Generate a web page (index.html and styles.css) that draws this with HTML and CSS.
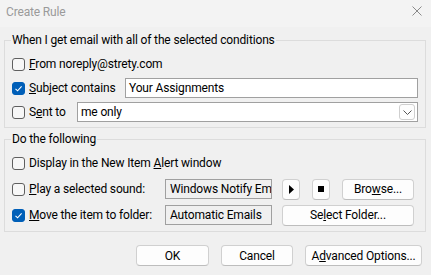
FILE: index.html
```html
<!DOCTYPE html>
<html lang="en">
<head>
    <meta charset="UTF-8">
    <title>Create Rule</title>
    <link rel="stylesheet" href="styles.css">
</head>
<body>
<div class="titlebar">
    <span class="title">Create Rule</span>
    <svg class="close" width="10" height="10" viewBox="0 0 10 10">
        <path d="M0.5 0.5 L9.5 9.5 M9.5 0.5 L0.5 9.5" stroke="#8a8a8a" stroke-width="1" fill="none"/>
    </svg>
</div>
<div class="dialog">
    <fieldset class="group">
        <legend>When I get email with all of the selected conditions</legend>
        <div class="row">
            <span class="check"></span>
            <span class="label"><u>F</u>rom noreply@strety.com</span>
        </div>
        <div class="row">
            <span class="check on">
                <svg width="13" height="13" viewBox="0 0 13 13"><path d="M3.5 6.8 L5.6 8.8 L9.6 4.4" stroke="#fff" stroke-width="1.1" fill="none"/></svg>
            </span>
            <span class="label label-subject"><u>S</u>ubject contains</span>
            <div class="field">Your Assignments</div>
        </div>
        <div class="row">
            <span class="check"></span>
            <span class="label label-sent">S<u>e</u>nt to</span>
            <div class="field select">
                <span>me only</span>
                <span class="drop">
                    <svg width="9" height="5" viewBox="0 0 9 5"><path d="M0.5 0.5 L4.5 4.5 L8.5 0.5" stroke="#555" stroke-width="1" fill="none"/></svg>
                </span>
            </div>
        </div>
    </fieldset>

    <fieldset class="group group-actions">
        <legend>Do the following</legend>
        <div class="row">
            <span class="check"></span>
            <span class="label">Display in the New Item <u>A</u>lert window</span>
        </div>
        <div class="row">
            <span class="check"></span>
            <span class="label label-action"><u>P</u>lay a selected sound:</span>
            <div class="field readonly">Windows Notify Email</div>
            <button class="btn btn-icon">
                <svg width="5" height="9" viewBox="0 0 5 9"><path d="M0 0 L5 4.5 L0 9 Z" fill="#000"/></svg>
            </button>
            <button class="btn btn-icon">
                <svg width="6" height="6" viewBox="0 0 6 6"><rect width="6" height="6" fill="#000"/></svg>
            </button>
            <button class="btn btn-browse">Bro<u>w</u>se...</button>
        </div>
        <div class="row">
            <span class="check on">
                <svg width="13" height="13" viewBox="0 0 13 13"><path d="M3.5 6.8 L5.6 8.8 L9.6 4.4" stroke="#fff" stroke-width="1.1" fill="none"/></svg>
            </span>
            <span class="label label-action"><u>M</u>ove the item to folder:</span>
            <div class="field readonly">Automatic Emails</div>
            <button class="btn btn-folder">Se<u>l</u>ect Folder...</button>
        </div>
    </fieldset>

    <div class="actions">
        <button class="btn btn-ok">OK</button>
        <button class="btn btn-cancel">Cancel</button>
        <button class="btn btn-advanced">A<u>d</u>vanced Options...</button>
    </div>
</div>
</body>
</html>
```

FILE: styles.css
```css
/* Dialog */
body {
    font-family: Roboto, 'Noto Sans', sans-serif;
    font-size: 12px;
    letter-spacing: -0.15px;
    margin: 0;
    padding: 0;
    background-color: #f0f0f0;
    color: #000;
}

.titlebar {
    display: flex;
    justify-content: space-between;
    align-items: flex-start;
    height: 27px;
    padding: 0 9px 0 6px;
    background-color: #f3f3f3;
}

.titlebar .title {
    line-height: 25px;
    color: #9a9a9a;
}

.titlebar .close {
    margin-top: 6px;
}

.dialog {
    padding: 5px 5px 0 4px;
}

.group {
    margin: 0;
    padding: 0 7px 5px 6px;
    border: 1px solid #dcdcdc;
}

.group legend {
    padding: 0 1px;
    line-height: 16px;
}

.group-actions {
    margin-top: 3px;
    padding-bottom: 6px;
}

.row {
    display: flex;
    align-items: center;
    height: 20px;
    margin-top: 4px;
}

.row:first-of-type {
    margin-top: 6px;
}

.group-actions .row {
    margin-top: 6px;
}

.check {
    flex: 0 0 auto;
    width: 13px;
    height: 13px;
    box-sizing: border-box;
    border: 1px solid #5f5f5f;
    border-radius: 3px;
    background-color: #f7f7f7;
    margin: 0 4px 0 1px;
}

.check svg {
    display: block;
    margin: -1px;
}

.check.on {
    background-color: #005fb8;
    border-color: #005fb8;
}

.label {
    white-space: nowrap;
}

.label-subject {
    width: 96px;
}

.label-sent {
    width: 48px;
}

.label-action {
    width: 136px;
}

.field {
    flex: 1;
    height: 20px;
    box-sizing: border-box;
    border: 1px solid #a0a0a0;
    background-color: #fff;
    padding-left: 3px;
    line-height: 18px;
    white-space: nowrap;
    overflow: hidden;
}

.field.select {
    display: flex;
    justify-content: space-between;
    align-items: center;
    padding-right: 2px;
}

.drop {
    display: flex;
    align-items: center;
    justify-content: center;
    width: 16px;
    height: 16px;
    box-sizing: border-box;
    border: 1px solid #cfcfcf;
    border-radius: 3px;
    background-color: #fdfdfd;
}

.field.readonly {
    flex: 0 0 107px;
    background-color: #f0f0f0;
    padding-left: 4px;
}

.btn {
    font-family: inherit;
    font-size: 12px;
    letter-spacing: inherit;
    color: #000;
    height: 21px;
    padding: 0;
    box-sizing: border-box;
    border: 1px solid #d0d0d0;
    border-bottom-color: #bdbdbd;
    border-radius: 4px;
    background-color: #fdfdfd;
    display: flex;
    align-items: center;
    justify-content: center;
    flex: 0 0 auto;
}

.btn-icon {
    width: 18px;
    margin-left: 12px;
}

.row .btn-icon:first-of-type {
    margin-left: 10px;
}

.btn-browse {
    width: 72px;
    margin-left: 12px;
}

.btn-folder {
    width: 132px;
    margin-left: 10px;
}

.actions {
    display: flex;
    justify-content: flex-end;
    gap: 12px;
    margin-top: 13px;
    padding-right: 4px;
}

.btn-ok {
    width: 73px;
}

.btn-cancel {
    width: 72px;
}

.btn-advanced {
    width: 117px;
}
```
